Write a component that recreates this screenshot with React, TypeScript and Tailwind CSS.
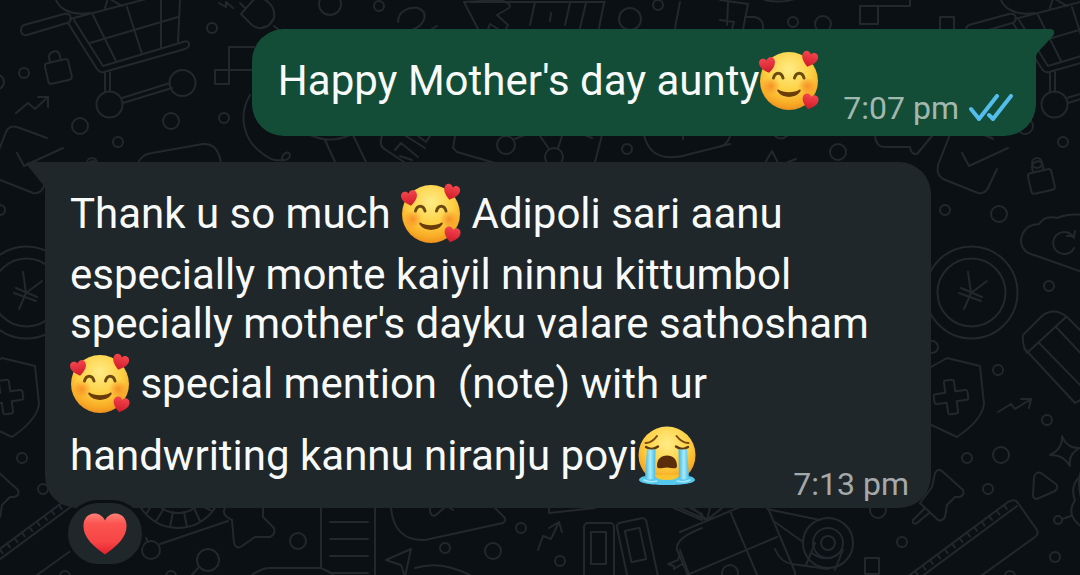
/*
Chat View:
- Shows:
--> Sent message with read ticks
--> Received message with a reaction
--> Doodle wallpaper behind both
*/
import type { ReactNode } from "react";

// Width of one wallpaper repeat
const TILE = 945;

// Small rings scattered over the wallpaper: x, y, radius
const rings = [
  [24, 73, 5], [-3, 82, 7], [80, 126, 8], [171, 121, 8], [118, 142, 5], [224, 118, 5],
  [212, 28, 5], [330, 4, 11], [92, 163, 5], [379, 6, 5], [630, 19, 11], [658, 5, 5],
  [506, 145, 9], [554, 157, 9], [627, 149, 5], [793, 22, 5], [823, 24, 8], [838, 152, 8],
  [0, 210, 5], [54, 214, 8], [104, 286, 5], [-13, 347, 6], [53, 370, 5], [102, 420, 5],
  [22, 458, 5], [56, 455, 8], [43, 489, 5], [113, 520, 4], [110, 557, 5], [65, 576, 5],
  [151, 550, 9], [208, 560, 11], [298, 541, 8], [171, 576, 5], [445, 548, 5], [493, 551, 8],
  [521, 528, 5], [560, 561, 5], [878, 510, 8], [902, 542, 5], [730, 573, 8],
];

const doodlePaths = [
  // shopping cart
  "M24 25L64 14Q70 13 71 18Q71 22 67 23L27 35Q22 36 21 31Q21 26 24 25Z",
  "M55 -5C56 8 70 16 90 13M70 19L150 -2M108 -2L105 8M110 -1L122 6",
  "M68 23L97 69Q100 73 104 72L185 49Q190 47 189 43Q187 40 183 42L103 66L74 20",
  "M93 15L116 61M127 7L142 54M161 0V48M180 0L178 42M90 43L178 17",
  "M105 72V92M110 72V92M122 98L170 83M123 103L172 88",
  // arrows
  "M16 113L28 103L35 109L48 97M38 97H48V107",
  "M53 412L66 404L70 409L86 399M76 399H86L84 408",
  "M538 550L543 536L551 539L559 522M549 528L559 522L562 532",
  // ticked note
  "M47 138L17 127Q9 125 6 132L-7 165Q-9 175 -2 179L33 193Q40 194 43 188L52 169M17 153L24 166L63 148",
  // plug and bolt
  "M256 -3L241 14L252 25Q260 31 268 26L274 18Q276 5 262 -2M263 27Q270 27 274 18M274 26L279 30M240 3L245 8M219 3L226 7V2L233 8",
  // steps
  "M229 70V47H254M229 70H254M878 6H910V0",
  "M138 163Q142 154 152 153L203 144Q218 143 221 163",
  "M250 95C238 115 243 140 262 153Q272 162 282 160C282 152 290 150 290 156Q288 161 282 160",
  "M310 135Q330 144 350 135M325 140L335 162M353 135L366 162",
  // cursor, hand and laptop
  "M398 22C398 10 410 7 418 8C428 12 427 24 412 30M430 30L437 26",
  "M464 2L478 29M464 2L500 0Q513 4 509 8L497 15L508 25L506 29M488 29L490 24L498 29M470 2H605",
  "M535 2L530 25M551 13L550 21M570 3L565 25M586 3L580 28M604 3L599 28M680 2L675 28",
  // fork, tag and network
  "M382 136Q378 146 386 150L404 162M395 150L401 143L418 157M400 156L412 160M406 136L425 148M418 136L426 142L430 136",
  "M455 136L453 148L457 152L495 163M515 139L525 135M540 136L549 149M562 136L558 148M602 135L595 162M580 133L592 138",
  "M644 135C650 160 670 160 690 154L730 144M683 135V139",
  // boxes on the top right
  "M720 0L748 4L743 29M728 3L727 25M720 20L734 22L732 29M745 17H755Q764 19 763 29M765 0Q783 4 797 -2",
  "M720 147Q728 144 730 136M775 136Q781 141 787 136M765 163L772 151L778 163M788 162L796 159",
  "M875 136Q876 147 885 147H910Q911 155 917 154L932 136M985 135L993 139",
  // cloud with refresh
  "M89 255Q76 252 76 240Q78 225 94 224Q100 215 112 218Q125 212 145 216M89 255L140 273",
  "M129 238A11 11 0 1 0 129 248M122 236H129L130 231",
  // yen sign
  "M23 272L26 293L19 309M26 293L42 281M14 293L36 301M16 288L37 297",
  // eraser
  "M82 353Q77 345 78 335L98 315Q110 307 122 317L150 345M82 353L121 317M79 348L130 403L142 396M94 343L142 392M111 327L142 360",
  // shield
  "M-32 366L-14 367L2 358L35 366L39 404Q37 420 12 437L-20 422",
  // sparkle and play
  "M117 436Q122 449 135 448Q123 454 125 466Q118 454 105 455Q118 449 117 436Z",
  "M96 473L111 484Q114 488 110 491L92 499Q88 499 88 495L89 477Q91 471 96 473Z",
  "M117 519L126 516M137 475Q124 485 130 500Q120 515 137 527",
  // push pins
  "M-10 473Q-7 468 -3 471L18 490Q20 496 14 497L10 497L2 505L0 517Q-3 522 -7 520L-25 503L-13 487Z",
  "M-20 508L-32 520Q-33 525 -28 523L-16 513",
  "M225 508Q221 515 232 520L234 543Q236 550 242 546L255 537L270 537Q276 534 274 528L263 517V508",
  // ruler
  "M-38 577L63 502Q70 498 73 503L92 530Q94 534 90 537L37 575M-24 577L72 506",
  // line with two ends and the list
  "M160 544L228 521M146 538L148 542M199 567L190 577M321 508V568M375 508V577M330 522H368M330 539H368M330 556H368M330 573H368",
  "M252 575Q262 568 270 568H321L333 574",
  // mouse, paper plane
  "M391 508C393 530 405 541 425 540L503 523Q507 520 504 517L495 508M430 508Q430 518 436 515L444 508M450 508L453 510",
  "M386 560L411 549L405 577L401 565ZM415 568Q440 560 470 575M549 508V513L595 508",
  // bug
  "M702 528Q675 538 677 550L688 575M674 508L702 520M690 508L702 514M680 553L678 560L668 564L674 566V569L682 564L684 566",
  // gift
  "M680 532L740 507M730 511L758 577M687 575L777 537M680 550L690 577M680 508L707 520L722 508M693 508L707 520L710 508M768 508L795 572V577",
  // tape
  "M767 509L820 520M775 522L803 542M775 549Q780 562 792 564L828 569M815 543L806 565M842 552L835 570M812 553Q828 565 843 550",
];

function Lock({ x, y }: { x: number; y: number }) {
  return (
    <g transform={`translate(${x} ${y}) rotate(-13)`}>
      <rect x="-12" y="-9" width="24" height="21" rx="3" />
      <path d="M-6 -9V-14Q-5 -19 0 -19Q5 -19 5 -14V-9" />
    </g>
  );
}

function DoodleTile({ offset }: { offset: number }) {
  return (
    <g transform={`translate(${offset} 0)`}>
      {rings.map(([x, y, r]) => (
        <circle key={`${x}-${y}`} cx={x} cy={y} r={r} />
      ))}
      {doodlePaths.map((d) => (
        <path key={d} d={d} />
      ))}

      {/* cart wheels */}
      <circle cx="109.5" cy="104.5" r="13" />
      <circle cx="182.5" cy="83" r="13" />

      <Lock x={58} y={70} />
      <Lock x={96} y={180} />

      {/* coin */}
      <circle cx="26.5" cy="292.5" r="46" />
      <circle cx="26.5" cy="292.5" r="34" />

      <path
        transform="translate(6 397) rotate(-8)"
        d="M-5 -15Q-5 -17 -3 -17H3Q5 -17 5 -15V-5H15Q17 -5 17 -3V3Q17 5 15 5H5V15Q5 17 3 17H-3Q-5 17 -5 15V5H-15Q-17 5 -17 3V-3Q-17 -5 -15 -5H-5Z"
      />

      {/* ruler marks */}
      {Array.from({ length: 13 }, (_, i) => (
        <path key={i} d={`M${-30 + i * 7.4} ${571 - i * 5.5}l3 4`} />
      ))}

      {/* reel */}
      <circle cx="178" cy="484" r="44" />
      <circle cx="178" cy="484" r="29" />
      <path d="M150 508L146 514M163 510L156 521M173 512L170 527M184 512L187 527M194 508L200 521M202 506L212 511" />

      {/* books */}
      <rect x="584" y="523" width="30" height="60" rx="4" />
      <rect x="591" y="532" width="15" height="32" />
      <g transform="rotate(-12 632 555)">
        <rect x="623" y="521" width="30" height="66" rx="4" />
        <rect x="630" y="530" width="15" height="32" />
      </g>

      <circle cx="828" cy="543" r="7" />
      <circle cx="828" cy="543" r="15" />
      <circle cx="828" cy="543" r="25" />

      <rect x="940" y="17" width="14" height="14" />
      <rect x="215" y="70" width="14" height="14" />
      <rect x="860" y="6" width="18" height="18" />
      <rect x="865" y="558" width="14" height="16" />
    </g>
  );
}

function Wallpaper() {
  return (
    <svg
      className="absolute inset-0 h-full w-full"
      viewBox="0 0 1080 575"
      preserveAspectRatio="xMidYMid slice"
      fill="none"
      stroke="#22282c"
      strokeWidth="2"
      strokeLinecap="round"
      strokeLinejoin="round"
      aria-hidden="true"
    >
      <DoodleTile offset={0} />
      <DoodleTile offset={TILE} />
    </svg>
  );
}

const HEART =
  "M0 8C-4 5 -8 2 -8 -2.6C-8 -5.4 -6.2 -7.2 -4 -7.2C-2.2 -7.2 -.7 -6.2 0 -4.6C.7 -6.2 2.2 -7.2 4 -7.2C6.2 -7.2 8 -5.4 8 -2.6C8 2 4 5 0 8Z";

const emojiClass = "my-1.5 inline-block h-[60px] w-[60px] align-[-22px] overflow-visible";

function LoveFace() {
  return (
    <svg className={emojiClass} viewBox="0 0 60 60" role="img" aria-label="smiling face with hearts">
      <circle cx="30" cy="30" r="29" fill="url(#face)" />
      <circle cx="12" cy="35" r="9" fill="url(#blush)" />
      <circle cx="48" cy="35" r="9" fill="url(#blush)" />
      <path d="M14.500 27C16 20.500 22.500 20.500 24 27" fill="none" stroke="#6b4a10" strokeWidth="3" strokeLinecap="round" />
      <path d="M35.500 27C37 20.500 43.500 20.500 45 27" fill="none" stroke="#6b4a10" strokeWidth="3" strokeLinecap="round" />
      <path d="M19.500 38.500C24 42 36 42 40.500 38.500C42 38 42 40 41 41C36 47.500 24 47.500 19 41C18 40 18 38 19.500 38.500Z" fill="#6a3c0a" />
      <path d={HEART} transform="translate(8.500 14) rotate(-12)" fill="url(#heart)" />
      <path d={HEART} transform="translate(50.500 8) rotate(16)" fill="url(#heart)" />
      <path d={HEART} transform="translate(51 50.500) rotate(14)" fill="url(#heart)" />
    </svg>
  );
}

function CryFace() {
  return (
    <svg className={emojiClass} viewBox="1 2 60 60" role="img" aria-label="loudly crying face">
      <circle cx="30" cy="31" r="28.500" fill="url(#face)" />
      <path d="M8.500 19Q15 19 20 12M39.500 12Q45 19 51.500 19" fill="none" stroke="#7a4a12" strokeWidth="2" strokeLinecap="round" />
      <path d="M9 23Q15 27 21 22.500M39 22.500Q45 27 51 23" fill="none" stroke="#5f3a0c" strokeWidth="2.400" strokeLinecap="round" />
      <path d="M20 42C20 35 24 31.500 30 31.500C36 31.500 40 35 40 42C40 45 37 44.500 30 43.500C23 44.500 20 45 20 42Z" fill="#5c2d0b" />
      <path d="M2 56C3 52 10 51 18 53Q30 49 42 53C50 51 57 52 58 56C57 60 42 61 30 61C18 61 3 60 2 56Z" fill="#55c8ee" />
      <path d="M18 51Q18 56 30 56Q42 56 42 51Z" fill="#f9c52f" />
      <path d="M10 25Q14 26 18.500 25L18 54Q13 57 8 54Z" fill="url(#tear)" />
      <path d="M41.500 25Q46 26 50 25L52 54Q47 57 42 54Z" fill="url(#tear)" />
      <path d="M7 56Q13 59 20 57M40 57Q47 59 53 56" fill="none" stroke="#a8eafb" strokeWidth="1.500" strokeLinecap="round" />
    </svg>
  );
}

// Gradients shared by all emoji drawings
function EmojiDefs() {
  return (
    <svg className="absolute h-0 w-0" aria-hidden="true">
      <defs>
        <radialGradient id="face" cx="0.5" cy="0.3" r="0.7">
          <stop offset="0" stopColor="#ffec86" />
          <stop offset="0.55" stopColor="#fdd043" />
          <stop offset="0.85" stopColor="#f8ab25" />
          <stop offset="1" stopColor="#ef9120" />
        </radialGradient>
        <radialGradient id="blush">
          <stop offset="0" stopColor="#f5791f" stopOpacity="0.7" />
          <stop offset="1" stopColor="#f5791f" stopOpacity="0" />
        </radialGradient>
        <linearGradient id="heart" x1="0" y1="0" x2="0" y2="1">
          <stop offset="0" stopColor="#f5454c" />
          <stop offset="1" stopColor="#cf1a2b" />
        </linearGradient>
        <linearGradient id="bigHeart" x1="0" y1="0" x2="0" y2="1">
          <stop offset="0" stopColor="#ff8078" />
          <stop offset="0.25" stopColor="#fb5450" />
          <stop offset="0.7" stopColor="#f64545" />
          <stop offset="1" stopColor="#e81f2c" />
        </linearGradient>
        <linearGradient id="tear">
          <stop offset="0" stopColor="#3fb4e0" />
          <stop offset="0.5" stopColor="#a6ecfb" />
          <stop offset="1" stopColor="#45bbe6" />
        </linearGradient>
      </defs>
    </svg>
  );
}

function MessageText({ children }: { children: ReactNode }) {
  return <p className="text-[42px] leading-[49px] text-[#f8fafa]">{children}</p>;
}

function App() {
  return (
    <main className="relative flex min-h-screen flex-col overflow-hidden bg-[#0b1014] pt-[29px] font-['Roboto',sans-serif]">
      <EmojiDefs />
      <Wallpaper />

      {/* Sent message */}
      <article className="relative mr-11 flex items-end gap-6 self-end rounded-[32px] rounded-tr-none bg-[#144d37] pr-[23px] pl-[26px]">
        <svg className="absolute left-full top-0 -ml-px h-7 w-5" viewBox="0 0 20 28" aria-hidden="true">
          <path d="M0 0H15Q20 0 19 5Q18 7 16 9L3 23Q1 25 1 28H0Z" fill="#144d37" />
        </svg>
        <div className="pt-4 pb-[19px]">
          <MessageText>
            Happy Mother's day aunty
            <LoveFace />
          </MessageText>
        </div>
        <div className="flex shrink-0 items-center gap-2.5 pb-2.5">
          <time className="text-[32px] leading-9 text-[#a1b8af]">7:07 pm</time>
          <svg className="h-7 w-11" viewBox="0 0 44 28" fill="none" stroke="#53bdeb" strokeWidth="4" strokeLinecap="round" strokeLinejoin="round" role="img" aria-label="Read">
            <path d="M2 15L10 25L28 2M20 21L24 25L42 2" />
          </svg>
        </div>
      </article>

      {/* Received message */}
      <article className="relative mt-[26px] mr-[149px] ml-[45px] rounded-[32px] rounded-tl-none bg-[#1f272a] pt-4 pr-[22px] pb-[6px] pl-[25px]">
        <svg className="absolute right-full top-0 -mr-px h-7 w-5" viewBox="0 0 20 28" aria-hidden="true">
          <path d="M20 0H3Q-1 0 1 3L18 24Q19 26 20 28Z" fill="#1f272a" />
        </svg>
        <MessageText>
          Thank u so much <LoveFace /> Adipoli sari aanu especially monte kaiyil ninnu kittumbol
          specially mother's dayku valare sathosham <LoveFace /> special mention&nbsp; (note) with ur
          handwriting kannu niranju poyi
          <CryFace />
        </MessageText>
        <div className="-mt-[26px] flex justify-end">
          <time className="text-[32px] leading-9 text-[#a5a9ab]">7:13 pm</time>
        </div>
      </article>

      {/* Reaction */}
      <button
        aria-label="Reaction: red heart"
        className="relative -mt-2 ml-[65px] flex h-[67px] w-20 items-center justify-center rounded-full border-3 border-[#0b1014] bg-[#1f272a]"
      >
        <svg className="h-[42px] w-[46px]" viewBox="-8.200 -7.400 16.400 15.600" aria-hidden="true">
          <path d={HEART} fill="url(#bigHeart)" />
        </svg>
      </button>
    </main>
  );
}

export default App;
